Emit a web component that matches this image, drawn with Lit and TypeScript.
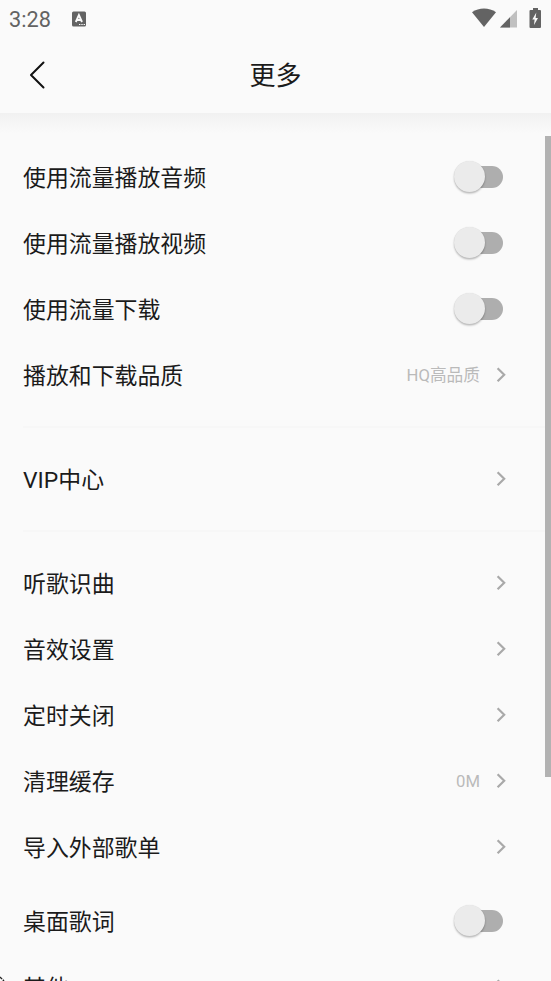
import { LitElement, html, css, nothing } from "lit";
import { customElement, property } from "lit/decorators.js";

type Item = { label: string; value?: string; toggle?: boolean; gap?: boolean };

const groups: Item[][] = [
  [
    { label: "使用流量播放音频", toggle: true },
    { label: "使用流量播放视频", toggle: true },
    { label: "使用流量下载", toggle: true },
    { label: "播放和下载品质", value: "HQ高品质" },
  ],
  [{ label: "VIP中心" }],
  [
    { label: "听歌识曲" },
    { label: "音效设置" },
    { label: "定时关闭" },
    { label: "清理缓存", value: "0M" },
    { label: "导入外部歌单" },
    { label: "桌面歌词", toggle: true, gap: true },
    { label: "其他" },
  ],
];

@customElement("toggle-switch")
export class ToggleSwitch extends LitElement {
  static styles = css`
    :host { display: flex; width: 49px; height: 22px; }
    .track { display: flex; align-items: center; width: 100%; height: 22px; border-radius: 11px;
      background: linear-gradient(90deg, transparent 12px, #aeaeae 12px); }
    .thumb { flex: none; width: 31px; height: 31px; border-radius: 50%; background: #ebebeb;
      box-shadow: 0 1.5px 2px rgba(0, 0, 0, 0.26), 0 0 1px rgba(0, 0, 0, 0.12); }
  `;
  render() {
    return html`<div class="track"><div class="thumb"></div></div>`;
  }
}

@customElement("setting-row")
export class SettingRow extends LitElement {
  @property({ attribute: false }) item!: Item;
  static styles = css`
    :host { display: block; }
    .row { display: flex; align-items: center; height: 66px; padding: 0 45px 0 23px; }
    .spaced { margin-top: 8px; }
    .label { flex: 1; font-size: 22.9px; line-height: 34px; padding-top: 3px; color: #1b1b1b; }
    .value { font-size: 16.7px; line-height: 24px; padding-top: 2px; color: #bababa; margin-right: 16px; }
    .switch { margin: 0 3px 1px 0; }
    .chevron { width: 10px; height: 16px; fill: none; stroke: #a9a9a9; stroke-width: 2.2; }
  `;
  render() {
    const { label, value, toggle, gap } = this.item;
    return html`<div class="row ${gap ? "spaced" : ""}">
      <span class="label">${label}</span>
      ${value ? html`<span class="value">${value}</span>` : nothing}
      ${toggle
        ? html`<toggle-switch class="switch"></toggle-switch>`
        : html`<svg class="chevron" viewBox="0 0 10 16"><path d="M1.600 1.200 8.200 7.700 1.600 14.200" /></svg>`}
    </div>`;
  }
}

@customElement("app-root")
export class AppRoot extends LitElement {
  static styles = css`
    :host { display: block; position: relative; height: 981px; overflow: hidden; background: #fafafa;
      font-family: Roboto, "Noto Sans CJK SC", sans-serif; }
    .status { display: flex; align-items: center; height: 38px; padding: 0 10px 0 9px; color: #636363; }
    .time { font-size: 21.700px; font-weight: 450; line-height: 38px; padding-top: 1px; width: 63px; }
    .spacer { flex: 1; }
    .header { display: grid; grid-template-columns: 60px 1fr 60px; align-items: center; height: 75px; }
    .back { width: 20px; height: 30px; margin: 0 0 1px 27px; fill: none; stroke: #111; stroke-width: 2;
      stroke-linecap: round; stroke-linejoin: round; }
    .title { font-size: 26px; line-height: 38px; padding-top: 1px; text-align: center; color: #1b1b1b; }
    .shade { height: 20px; background: linear-gradient(#f1f1f1, #fafafa); }
    .list { padding-top: 11px; }
    .divider { height: 2px; margin: 18px 0 18px 23px; background: #f7f7f7; }
    .scrollbar { position: absolute; right: 0; top: 136px; width: 6px; height: 641px; background: #b2b2b2; }
    .pointer { position: absolute; left: 0; bottom: 0; width: 6px; height: 6px; }
  `;
  render() {
    return html`
      <div class="status">
        <span class="time">3:28</span>
        <svg width="14" height="16" viewBox="0 0 14 16">
          <rect y=".5" width="14" height="15" rx="1.5" fill="#636363" />
          <path d="M3.800 11 6.900 4 10 11M5 9h4" fill="none" stroke="#fafafa" stroke-width="1.9" />
          <path d="M7 13.500h1.400M9.300 13.500h1.400M11.600 13.500h1.400" stroke="#fafafa" stroke-width="1.1" />
        </svg>
        <span class="spacer"></span>
        <svg width="70" height="22" viewBox="471 8 70 22">
          <path d="M472 12.200C479 7.300 489 7.300 496 12.200L484 27Z" fill="#636363" />
          <path d="M517 10V27.500H500Z" fill="#c0c0c0" />
          <path d="M510 17.200V27.500H500Z" fill="#636363" />
          <path d="M533 8h5v2h2q1 0 1 1v15.900q0 1-1 1h-9.500q-1 0-1-1V11q0-1 1-1h2.500Z" fill="#636363" />
          <path d="M536.300 12.500 532.300 19.500h2.300l-.6 5.500 4-7h-2.400Z" fill="#fafafa" />
        </svg>
      </div>
      <div class="header">
        <svg class="back" viewBox="0 0 20 30"><path d="M16.500 2.500 4 15 16.500 27.500" /></svg>
        <div class="title">更多</div>
      </div>
      <div class="shade"></div>
      <div class="list">
        ${groups.map((g, i) => html`
          ${i ? html`<div class="divider"></div>` : nothing}
          ${g.map((item) => html`<setting-row .item=${item}></setting-row>`)}
        `)}
      </div>
      <div class="scrollbar"></div>
      <svg class="pointer" viewBox="0 0 6 6"><path d="M0 2 4 6" fill="none" stroke="#222" stroke-width="1.4" stroke-dasharray="3 1" /></svg>
    `;
  }
}
